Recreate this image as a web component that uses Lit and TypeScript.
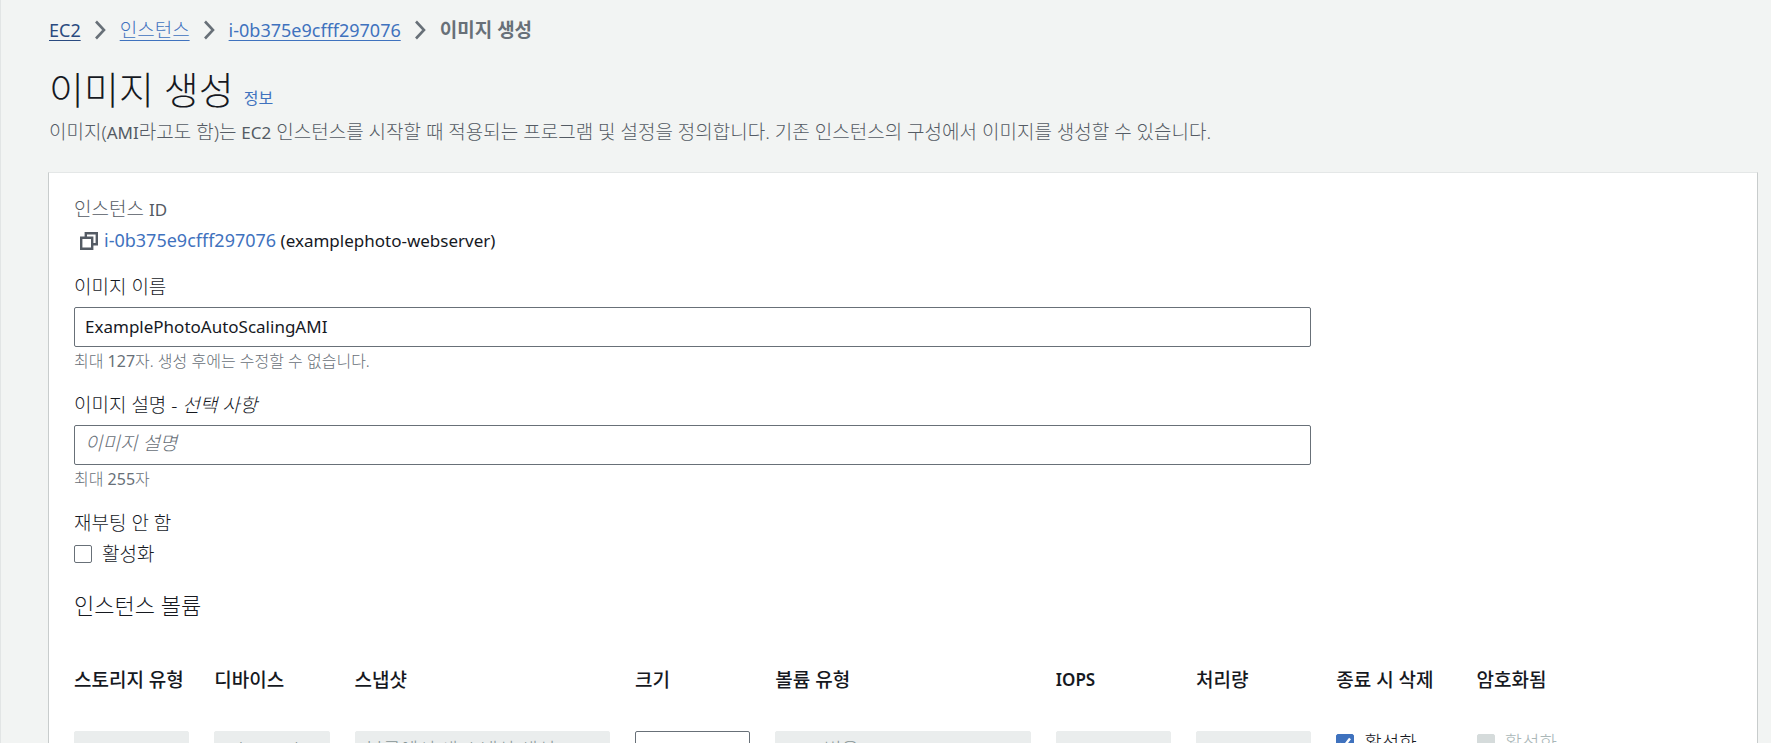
import { LitElement, html, css, svg } from "lit";
import { customElement } from "lit/decorators.js";

const chevron = html`<svg class="chevron" viewBox="0 0 12 20" aria-hidden="true">
  ${svg`<path d="M2 1.5 L10 10 L2 18.5" fill="none" stroke="#687078" stroke-width="2.6"/>`}
</svg>`;

@customElement("app-root")
export class AppRoot extends LitElement {
  static styles = css`
    :host {
      display: block;
      height: 100vh;
      box-sizing: border-box;
      overflow-y: auto;
      scrollbar-width: none;
      background: #f2f4f3;
      border-left: 1px solid #e2e5e5;
      color: #16191f;
      font-family: "Noto Sans", "Noto Sans CJK KR", sans-serif;
      font-size: 19px;
      line-height: 24px;
      font-weight: 300;
    }
    * { box-sizing: border-box; }
    h1, h2, p, ol { margin: 0; padding: 0; }
    a { color: #3f72be; text-decoration: none; }
    .page { padding: 18px 13px 0 47px; }
    .top { padding-left: 1px; }
    .latin { font-size: 17px; font-weight: 400; }
    .id { font-size: 18px; font-weight: 400; }
    .num { font-weight: 400; }
    .crumbs { display: flex; list-style: none; }
    .crumbs li { display: flex; align-items: center; }
    .crumbs a { text-decoration: underline; text-underline-offset: 3px; }
    .crumbs .root { color: #2a4a80; }
    .crumbs .current { color: #687078; font-weight: 700; }
    .chevron { width: 12px; height: 20px; margin: 0 14px 0 13px; }
    .heading { display: flex; align-items: baseline; gap: 10px; padding-top: 23px; }
    h1 { font-size: 38px; line-height: 48px; font-weight: 300; }
    .info { font-size: 16px; font-weight: 400; }
    .lead { color: #545b64; padding-top: 7px; }
    .card {
      margin-top: 27px;
      padding: 24px 25px;
      background: #fff;
      border: 1px solid #c8cccc;
      border-top-color: #e4e7e7;
    }
    .muted { color: #545b64; }
    .instance { display: flex; align-items: center; gap: 6px; padding: 6px 0 0 6px; }
    .copy { display: flex; padding: 0; border: 0; background: none; }
    .copy svg { width: 18px; height: 18px; }
    .form { width: calc((100% + 25px) * 0.75 - 25px); }
    .field { display: flex; flex-direction: column; margin-top: 22px; }
    .hint { font-size: 16px; line-height: 20px; color: #687078; margin-top: 4px; }
    .text {
      width: 100%;
      height: 40px;
      margin: 0;
      padding: 0 10px 4px;
      border: 1px solid #687078;
      border-radius: 2px;
      background: #fff;
      color: #16191f;
      font: inherit;
    }
    .field .text { margin-top: 8px; }
    .text.latin { font-size: 17px; font-weight: 400; padding-bottom: 2px; }
    .text::placeholder { color: #687078; font-style: italic; opacity: 1; }
    .text:disabled { background: #eaeded; border-color: #eaeded; color: #879596; }
    .check { display: flex; align-items: center; gap: 10px; }
    .field .check { margin-top: 7px; }
    .check input {
      appearance: none;
      width: 18px;
      height: 18px;
      margin: 0;
      border: 1px solid #687078;
      border-radius: 2px;
      background: #fff;
    }
    .check input:checked {
      border-color: #3f72be;
      background: #3f72be
        url("data:image/svg+xml,%3Csvg xmlns='http://www.w3.org/2000/svg' viewBox='0 0 16 16'%3E%3Cpath d='M3 8.5l3.5 3.5L13 3.5' fill='none' stroke='white' stroke-width='2.4'/%3E%3C/svg%3E")
        center / 16px no-repeat;
    }
    .check input:disabled { border-color: #d5dbdb; background: #d5dbdb; }
    .check.off { color: #aab7b8; }
    h2 { font-size: 22px; line-height: 28px; font-weight: 300; margin-top: 25px; }
    table { display: block; margin-top: 49px; }
    thead, tbody { display: block; }
    tr { display: grid; grid-template-columns: repeat(12, 1fr); gap: 25px; }
    th, td { padding: 0; text-align: left; min-width: 0; }
    th { font-weight: 500; }
    th.latin { font-weight: 600; }
    .wide { grid-column: span 2; }
    tbody { padding-top: 39px; }
  `;

  render() {
    return html`
      <main class="page">
        <div class="top">
          <nav>
            <ol class="crumbs">
              <li><a class="root id" href="#ec2">EC2</a>${chevron}</li>
              <li><a href="#instances">인스턴스</a>${chevron}</li>
              <li><a class="id" href="#instance">i-0b375e9cfff297076</a>${chevron}</li>
              <li class="current">이미지 생성</li>
            </ol>
          </nav>
          <div class="heading"><h1>이미지 생성</h1><a class="info" href="#info">정보</a></div>
          <p class="lead">이미지(<span class="latin">AMI</span>라고도 함)는 <span class="latin">EC2</span> 인스턴스를 시작할 때 적용되는 프로그램 및 설정을 정의합니다. 기존 인스턴스의 구성에서 이미지를 생성할 수 있습니다.</p>
        </div>
        <section class="card">
          <div class="muted">인스턴스 <span class="latin">ID</span></div>
          <div class="instance">
            <button class="copy" aria-label="복사">
              <svg viewBox="0 0 18 18" fill="none" stroke="#545b64" stroke-width="2.4"><path d="M1.2 5.8h11v11h-11zM5.8 5.5V1.2h11v11h-4.3"/></svg>
            </button>
            <span class="latin"><a class="id" href="#instance">i-0b375e9cfff297076</a> (examplephoto-webserver)</span>
          </div>
          <div class="form">
            <div class="field">
              <label for="name">이미지 이름</label>
              <input class="text latin" id="name" value="ExamplePhotoAutoScalingAMI" />
              <p class="hint">최대 <span class="num">127</span>자. 생성 후에는 수정할 수 없습니다.</p>
            </div>
            <div class="field">
              <label for="desc">이미지 설명 - <em>선택 사항</em></label>
              <input class="text" id="desc" placeholder="이미지 설명" />
              <p class="hint">최대 <span class="num">255</span>자</p>
            </div>
            <div class="field">
              <span>재부팅 안 함</span>
              <label class="check"><input type="checkbox" />활성화</label>
            </div>
          </div>
          <h2>인스턴스 볼륨</h2>
          <table>
            <thead>
              <tr>
                <th>스토리지 유형</th><th>디바이스</th><th class="wide">스냅샷</th><th>크기</th>
                <th class="wide">볼륨 유형</th><th class="latin">IOPS</th><th>처리량</th><th>종료 시 삭제</th><th>암호화됨</th>
              </tr>
            </thead>
            <tbody>
              <tr>
                <td><input class="text" aria-label="스토리지 유형" disabled value="EBS" /></td>
                <td><input class="text" aria-label="디바이스" disabled value="/dev/xvda" /></td>
                <td class="wide"><input class="text" aria-label="스냅샷" disabled value="볼륨에서 새 스냅샷 생성" /></td>
                <td><input class="text" aria-label="크기" value="8" /></td>
                <td class="wide"><input class="text" aria-label="볼륨 유형" disabled value="EBS 범용 SSD - gp2" /></td>
                <td><input class="text" aria-label="IOPS" disabled value="100" /></td>
                <td><input class="text" aria-label="처리량" disabled /></td>
                <td><label class="check"><input type="checkbox" checked />활성화</label></td>
                <td><label class="check off"><input type="checkbox" disabled />활성화</label></td>
              </tr>
            </tbody>
          </table>
        </section>
      </main>
    `;
  }
}
